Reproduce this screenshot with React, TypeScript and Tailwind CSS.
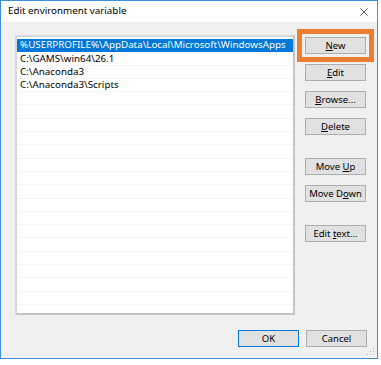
import React from 'react';

const font = { fontFamily: '"Noto Sans", "Open Sans", sans-serif' };

const paths = [
  '%USERPROFILE%\\AppData\\Local\\Microsoft\\WindowsApps',
  'C:\\GAMS\\win64\\26.1',
  'C:\\Anaconda3',
  'C:\\Anaconda3\\Scripts',
];

const Btn: React.FC<{ pre?: string; key_: string; post?: string; className?: string; primary?: boolean }> = ({
  pre = '',
  key_,
  post = '',
  className = '',
  primary,
}) => (
  <div
    className={`w-[61px] h-[17px] flex items-center justify-center bg-[#e1e1e1] border text-[9.5px] text-black leading-none ${
      primary ? 'border-[#0078d7]' : 'border-[#adadad]'
    } ${className}`}
  >
    <span>
      {pre}
      {key_ && <span className="underline underline-offset-1">{key_}</span>}
      {post}
    </span>
  </div>
);

const App: React.FC = () => {
  const rows = Array.from({ length: 21 }, (_, i) => paths[i] ?? '');

  return (
    <div className="w-[381px] h-[365px] bg-white" style={font}>
      <div className="w-[378px] h-[359px] border border-[#3d8fdc] flex flex-col">
        <div className="h-[21px] bg-white flex items-center justify-between pl-[7px] pr-[7px] shrink-0">
          <span className="text-[9.8px] text-black">Edit environment variable</span>
          <svg width="10" height="10" viewBox="0 0 10 10" className="mr-[1px]">
            <path d="M1.5 1.5 L8.5 8.5 M8.5 1.5 L1.5 8.5" stroke="#444" strokeWidth="0.9" />
          </svg>
        </div>

        <div className="flex-1 bg-[#f0f0f0] flex flex-col relative">
          <div className="flex pt-[13px] pl-[14px]">
            <div className="w-[280px] h-[280px] bg-white border-2 border-[#c4c4c8] border-t-[#d8d8dc] border-l-[#d8d8dc] pt-[2px] overflow-hidden">
              {rows.map((r, i) => (
                <div
                  key={i}
                  className={`h-[13.3px] flex items-center pl-[3px] text-[9.8px] leading-none whitespace-nowrap border-b ${
                    i === 0 ? 'bg-[#0078d7] text-white border-[#0078d7]' : 'text-black border-[#f5f5f5]'
                  }`}
                >
                  {r}
                </div>
              ))}
            </div>

            <div className="ml-[10px] pt-[2px] flex flex-col">
              <Btn key_="N" post="ew" />
              <Btn key_="E" post="dit" className="mt-[10px]" />
              <Btn key_="B" post="rowse..." className="mt-[10px]" />
              <Btn key_="D" post="elete" className="mt-[10px]" />
              <Btn pre="Move " key_="U" post="p" className="mt-[23px]" />
              <Btn pre="Move D" key_="o" post="wn" className="mt-[10px]" />
              <Btn pre="Edit " key_="t" post="ext..." className="mt-[23px]" />
            </div>
          </div>

          <div className="flex justify-end gap-[7px] pr-[10px] mt-[15px]">
            <Btn key_="" pre="OK" primary />
            <Btn key_="" pre="Cancel" />
          </div>

          <div className="absolute left-[296px] top-[7px] w-[77px] h-[33px] border-[5px] border-[#ed7d31]" />

          <svg width="8" height="8" viewBox="0 0 8 8" className="absolute right-[2px] bottom-[2px]">
            <rect x="6" y="0" width="1" height="1" fill="#b0b0b0" />
            <rect x="3" y="3" width="1" height="1" fill="#b0b0b0" />
            <rect x="6" y="3" width="1" height="1" fill="#b0b0b0" />
            <rect x="0" y="6" width="1" height="1" fill="#b0b0b0" />
            <rect x="3" y="6" width="1" height="1" fill="#b0b0b0" />
            <rect x="6" y="6" width="1" height="1" fill="#b0b0b0" />
          </svg>
        </div>
      </div>
    </div>
  );
};

export default App;
